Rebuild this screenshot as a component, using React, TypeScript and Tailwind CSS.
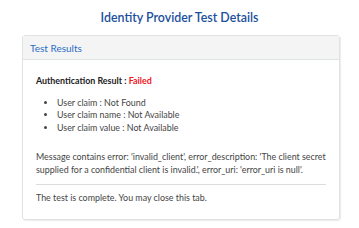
export default function App() {
  const font = { fontFamily: 'Lato, "Noto Sans", sans-serif' };
  return (
    <div className="w-[359px] h-[228px] bg-white overflow-hidden" style={font}>
      <h1 className="text-center text-[12.4px] font-semibold text-[#1c4f9c] pt-[9px] leading-[18px]">
        Identity Provider Test Details
      </h1>
      <div className="mx-[22px] mt-[8px] w-[318px] h-[185px] border border-[#dfe3e6] rounded-[3px] shadow-[1px_1px_1px_rgba(0,0,0,0.08)]">
        <div className="h-[24px] bg-[#f4f4f4] border-b border-[#dde2e5] px-[7px] flex items-center text-[10px] text-[#2a6cc4] leading-none">
          Test Results
        </div>
        <div className="px-[13px] pt-[15px] text-[8.9px] text-[#333] leading-[12.5px]">
          <div className="font-bold text-[#222]">
            Authentication Result : <span className="text-[#f0141e]">Failed</span>
          </div>
          <ul className="list-disc pl-[21px] mt-[9px] text-[#444]">
            <li>User claim : Not Found</li>
            <li>User claim name : Not Available</li>
            <li>User claim value : Not Available</li>
          </ul>
          <p className="mt-[17px] text-[#444]">
            Message contains error: 'invalid_client', error_description: 'The client secret supplied for a confidential client is invalid.', error_uri: 'error_uri is null'.
          </p>
          <div className="border-t border-[#dcdcdc] mt-[8px] mb-[7px]" />
          <p className="text-[#444]">The test is complete. You may close this tab.</p>
        </div>
      </div>
    </div>
  );
}
